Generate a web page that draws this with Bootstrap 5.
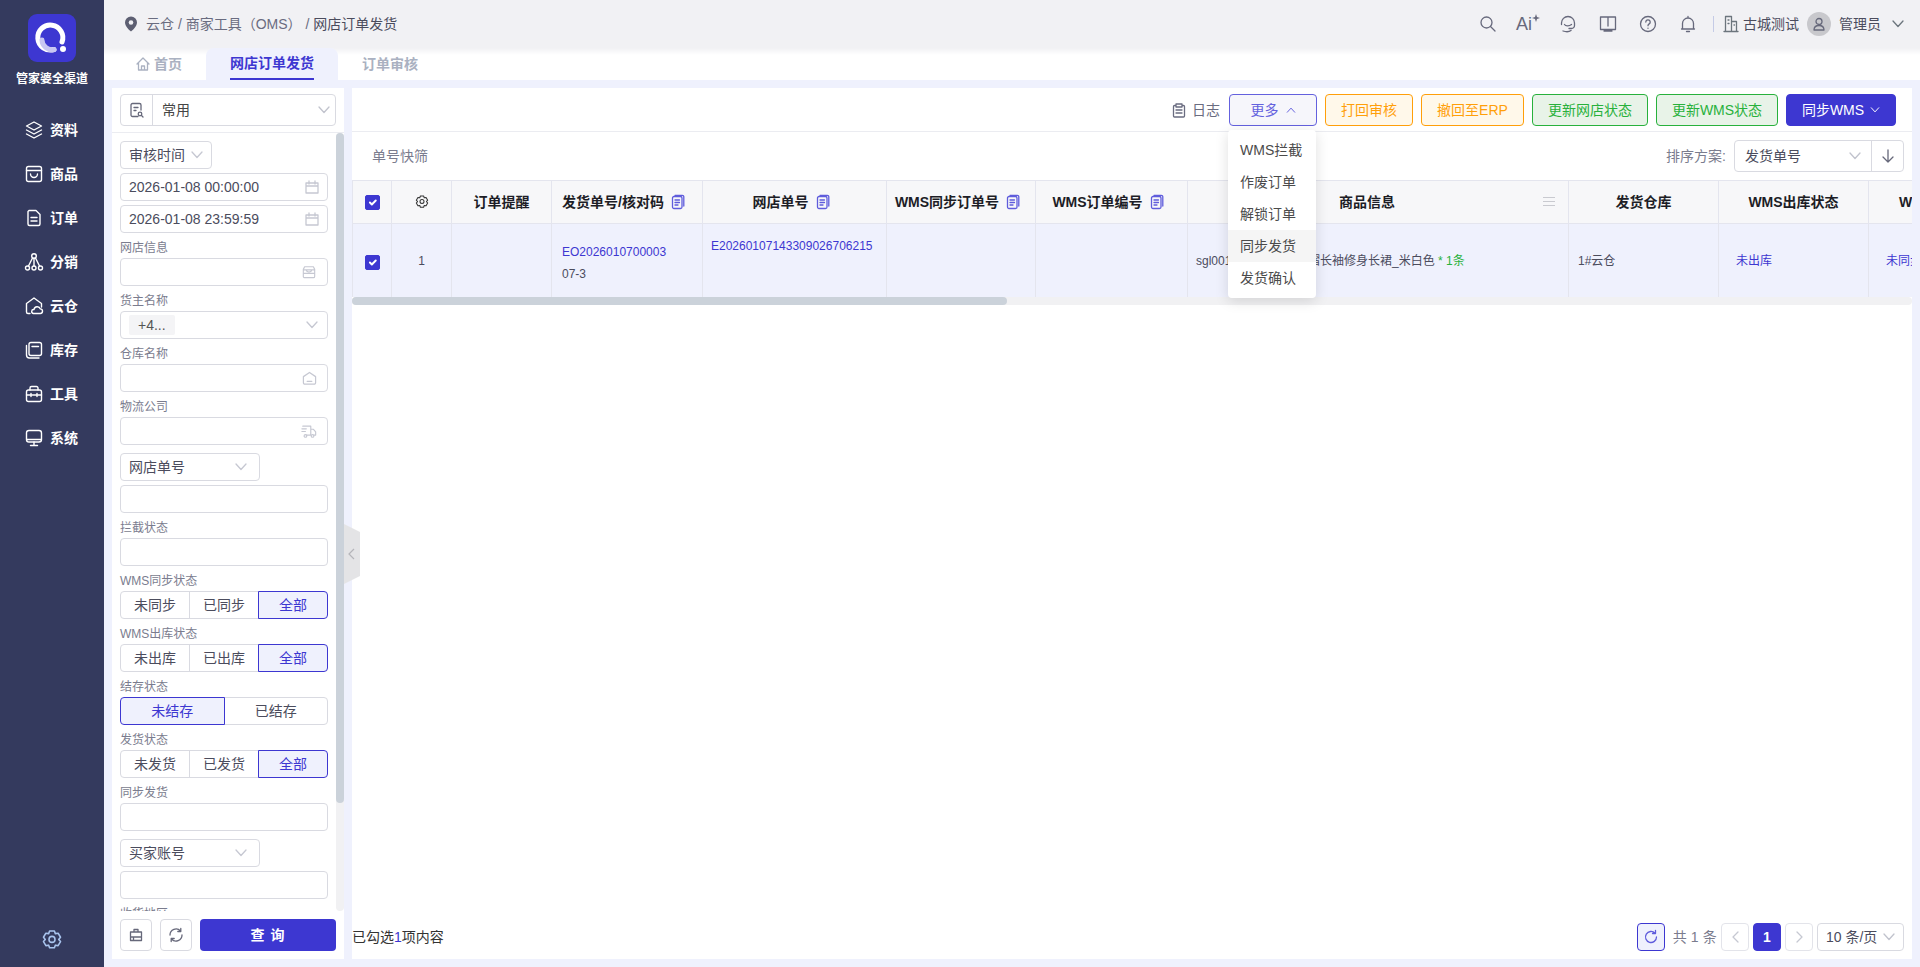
<!DOCTYPE html>
<html lang="zh-CN">
<head>
<meta charset="utf-8">
<title>网店订单发货</title>
<link href="https://cdn.jsdelivr.net/npm/bootstrap@5.3.0/dist/css/bootstrap.min.css" rel="stylesheet">
<style>
html,body{height:100%;}
body{font-family:"Liberation Sans","Noto Sans CJK SC",sans-serif;font-size:14px;color:#333;background:#eff1fd;overflow:hidden;}
.ico{fill:none;stroke:currentColor;stroke-width:1.3;stroke-linecap:round;stroke-linejoin:round;flex:none;}
.app{height:967px;width:1920px;}
.side{width:104px;flex:none;background:#343a5e;color:#fff;padding-top:14px;}
.logo{width:48px;height:48px;border-radius:9px;background:#3d37d1;}
.logo-name{font-size:12px;font-weight:700;line-height:18px;margin-top:8px;white-space:nowrap;}
.side-nav{margin-top:20px;}
.side-item{height:44px;padding-left:24px;gap:6px;font-weight:700;color:#fff;}
.side-item .ico{stroke-width:1.4;}
.side-gear{color:#a9c4ee;margin-bottom:15px;}
.mainc{min-width:0;}
.topb{height:48px;background:#f1f1f4;padding:0 16px 0 20px;flex:none;}
.crumb{color:#6a6c80;margin-left:8px;}
.crumb b{font-weight:400;color:#4b4c5d;}
.topi{width:40px;color:#67697c;}
.ai-txt{font-size:18px;line-height:20px;font-weight:400;}
.vsep{width:1px;height:16px;background:#c5cbe6;margin:0 9px 0 5px;}
.tabsb{height:32px;flex:none;padding-left:8px;background:linear-gradient(#f1f1f4,#fff 7px);}
.tabx{height:32px;padding:0 24px;font-weight:700;color:#aab1c1;gap:4px;}
.tabx.on{background:#eff1fd;color:#3d37d1;border-radius:8px 8px 0 0;}
.tabx.on span{display:block;line-height:30px;height:32px;border-bottom:2px solid #3d37d1;}
.work{flex:1;min-height:0;padding:8px;gap:8px;}
.lp{width:232px;flex:none;background:#fff;position:relative;}
.lp-head{height:45px;padding:6px 8px;border-bottom:1px solid #ebecf1;flex:none;}
.combo{height:32px;border:1px solid #d9dae1;border-radius:4px;}
.combo-ic{width:32px;border-right:1px solid #d9dae1;color:#66687a;}
.combo-tx{padding:0 5px 0 9px;color:#444;}
.chev{color:#c1c3cd;flex:none;}
.lp-body{height:778px;flex:none;}
.form-area{width:224px;flex:none;padding:8px 8px 0;overflow:hidden;}
.trk{width:8px;background:#f1f1f3;border-radius:4px;flex:none;}
.trk i{display:block;width:8px;height:670px;background:#cbd2da;border-radius:4px;}
.fld{height:28px;border:1px solid #d9dae1;border-radius:4px;background:#fff;padding:0 8px;color:#4b4c5d;line-height:1;font-size:14px;min-height:0;}
.fld .ico{color:#c6c8d2;}
.gp4{margin-top:4px;}.gp8{margin-top:8px;}
.mr1{margin-right:1px;}.mr2{margin-right:2px;}.mr3{margin-right:3px;}
.flabel{font-size:12px;line-height:16px;color:#7a7c8e;margin:7px 0 2px;}
.tagx{height:20px;width:46px;background:#f4f4f6;border-radius:2px;padding-left:9px;line-height:20px;color:#555;}
.seg{display:flex;height:28px;width:100%;}
.seg .btn{flex:1 1 0;font-size:14px;padding:0;height:28px;border:1px solid #d9dae1;color:#4b4c5d;background:#fff;border-radius:0;margin-left:-1px;line-height:1;}
.seg .btn:first-child{margin-left:0;border-radius:4px 0 0 4px;}
.seg .btn:last-child{border-radius:0 4px 4px 0;}
.seg .btn.act{background:#eff1fd;color:#3d37d1;border-color:#3d37d1;position:relative;z-index:1;}
.lp-foot{height:48px;padding:8px;gap:8px;}
.sq{width:32px;height:32px;padding:0;border:1px solid #d9dae1;border-radius:4px;background:#fff;color:#66687a;}
.qbtn{flex:1;height:32px;padding:0;background:#3d37d1;color:#fff;border:0;border-radius:4px;font-weight:700;font-size:14px;letter-spacing:1px;}
.hand{position:absolute;left:232px;top:436px;color:#b5b5ba;z-index:2;}
.rp{flex:1;min-width:0;background:#fff;position:relative;}
.tb1{height:44px;padding:6px 16px 0 0;border-bottom:1px solid #ebecf1;flex:none;gap:8px;}
.tb-log{color:#6a6c80;gap:6px;margin-right:1px;}
.bt{height:32px;font-size:14px;padding:0;border-radius:4px;line-height:1;border:1px solid;}
.bt-more{width:88px;background:#f6f6fb;border-color:#6461de;color:#6461de;gap:7px;}
.bt-or{background:#fff8ea;border-color:#ff9f0a;color:#ff9f0a;}
.bt-gr{background:#e8f3e8;border-color:#28b13c;color:#28b13c;}
.bt-pr{width:110px;background:#3d37d1;border-color:#3d37d1;color:#fff;gap:6px;}
.ddw{position:relative;}
.ddm{position:absolute;top:36px;left:-1px;width:88px;min-width:0;padding:4px 0;border:0;border-radius:4px;box-shadow:0 3px 14px rgba(0,0,0,.13);z-index:5;font-size:14px;}
.ddm .dropdown-item{height:32px;line-height:32px;padding:0 0 0 12px;color:#4b4b4b;font-size:14px;}
.ddm .dropdown-item.hov{background:#f5f5f5;}
.tb2{height:48px;flex:none;padding:0 8px 0 20px;}
.mut{color:#7a7c8e;}
.srt{width:170px;height:32px;border:1px solid #d9dae1;border-radius:4px;margin-left:8px;}
.srt-s{flex:1;padding:0 10px;color:#4b4c5d;}
.srt-b{width:32px;border-left:1px solid #d9dae1;color:#66687a;}
.gridw{overflow:hidden;flex:none;height:117px;}
.gridt{table-layout:fixed;width:1700px;margin:0;border-collapse:collapse;font-size:12px;--bs-table-bg:transparent;}
.gridt>:not(caption)>*>*{border:1px solid #e4e5ee;padding:0 10px;box-shadow:none;}
.gridt thead th{height:43px;background:#f7f7f9;font-size:14px;font-weight:700;color:#1d1d26;text-align:center;vertical-align:middle;white-space:nowrap;position:relative;}
.gridt tbody td{height:74px;background:#eff1fd;color:#4b4c5d;vertical-align:middle;white-space:nowrap;overflow:hidden;}
.gridt tbody td.lnk,.lnk{color:#3d37d1;}
.thf{display:flex;align-items:center;justify-content:center;gap:6px;padding-right:6px;}
.cpy{color:#5f5cdc;}
.gridt .form-check-input{margin:0;width:15px;height:15px;background-color:#3d37d1;border-color:#3d37d1;border-radius:2px;display:block;}
.gridt>:not(caption)>*>.pad0{padding:0;}
.gridt>tbody>*>.pad0{padding-top:3px;}
.cellc{display:flex;justify-content:center;}
.hamb{position:absolute;right:13px;top:15px;color:#c9cad0;}
.gridt>thead>tr>.th-goods{padding-right:32px;}
.gridt>tbody>tr>.l2{line-height:22px;padding-top:4px;}
.gridt>tbody>tr>.tp{vertical-align:top;padding-top:14px;line-height:16px;}
.grn{color:#28b13c;}
.hbar{height:8px;background:#f1f1f3;border-radius:4px;flex:none;}
.hbar i{display:block;height:8px;width:655px;background:#cbd2da;border-radius:4px;}
.rfoot{margin-top:auto;height:36px;padding-right:8px;margin-bottom:4px;flex:none;}
.pg{width:28px;height:28px;border:1px solid #e3e4ea;border-radius:4px;color:#c6c8d2;background:#fff;margin-left:4px;padding:0;}
.pg.on{background:#3d37d1;border-color:#3d37d1;color:#fff;font-weight:700;font-size:14px;}
.pg-ref{border-color:#3d37d1;color:#5f5cdc;background:#eff1fd;margin-left:0;margin-right:8px;}
.psz{width:87px;height:28px;border:1px solid #d9dae1;border-radius:4px;margin-left:4px;padding:0 8px;gap:5px;color:#4b4c5d;white-space:nowrap;}
</style>
</head>
<body>
<svg width="0" height="0" class="position-absolute">
<defs>
<symbol id="i-chev" viewBox="0 0 12 8"><path d="M1 1l5 5.500L11 1"/></symbol>
<symbol id="i-layers" viewBox="0 0 20 20"><path d="M10 2l7.500 4L10 10 2.500 6zM2.500 10l7.500 4 7.500-4M2.500 14l7.500 4 7.500-4"/></symbol>
<symbol id="i-goods" viewBox="0 0 20 20"><rect x="2.500" y="2.500" width="15" height="15" rx="2"/><path d="M2.500 6.500h15M6.500 10a3.500 3.500 0 0 0 7 0"/></symbol>
<symbol id="i-doc" viewBox="0 0 20 20"><path d="M5 2.500h7l4 4V16a1.500 1.500 0 0 1-1.500 1.500h-9A1.500 1.500 0 0 1 4 16V3.500zM7 9.500h6M7 13h6"/></symbol>
<symbol id="i-net" viewBox="0 0 20 20"><circle cx="10" cy="4" r="2.300"/><circle cx="3.500" cy="16" r="2"/><circle cx="10" cy="16" r="2"/><circle cx="16.500" cy="16" r="2"/><path d="M10 6.300V14M8.500 6L4.500 14M11.500 6l4 8"/></symbol>
<symbol id="i-cloud" viewBox="0 0 20 20"><path d="M6 17.500H4a1.500 1.500 0 0 1-1.500-1.500V7.500L10 2l7.500 5.500V11"/><path d="M9.500 17.500h6.500a2.300 2.300 0 0 0 .4-4.600 3.400 3.400 0 0 0-6.500.6 2 2 0 0 0-.4 4z"/></symbol>
<symbol id="i-box" viewBox="0 0 20 20"><rect x="5" y="2.500" width="12.500" height="13" rx="2"/><path d="M2.500 5.500V15a3 3 0 0 0 3 3H15M8 6.500h6.500"/></symbol>
<symbol id="i-tool" viewBox="0 0 20 20"><rect x="2.500" y="6" width="15" height="11.500" rx="2"/><path d="M6 6V4a1.500 1.500 0 0 1 1.500-1.500h5A1.500 1.500 0 0 1 14 4v2M2.500 11h15M7 9.500v3M13 9.500v3"/></symbol>
<symbol id="i-mon" viewBox="0 0 20 20"><rect x="2.500" y="2.500" width="15" height="11.500" rx="2.500"/><path d="M3 11.500h14M10 14v3.500M6.500 17.500h7"/></symbol>
<symbol id="i-gear" viewBox="0 0 20 20"><path d="M8 2.500h4l.8 2.200 2.300-.4 2 3.400-1.500 1.800 1.500 1.800-2 3.400-2.300-.4-.8 2.200H8l-.8-2.200-2.300.4-2-3.400 1.500-1.800-1.500-1.800 2-3.400 2.300.4z"/><circle cx="10" cy="9.500" r="2.500"/></symbol>
<symbol id="i-copy" viewBox="0 0 16 16"><rect x="2.500" y="2.500" width="9.500" height="12" rx="1.500"/><path d="M5 6h4.500M5 8.500h4.500M5 11h3M13.800 12V2.800A1.500 1.500 0 0 0 12.300 1.300H5"/></symbol>
<symbol id="i-cal" viewBox="0 0 14 14"><path d="M1 3h12v10H1zM1 6h12M4 1v3M10 1v3"/></symbol>
<symbol id="i-store" viewBox="0 0 16 16"><path d="M3 2h10l1.500 3v8a1.500 1.500 0 0 1-1.500 1.500H3A1.500 1.500 0 0 1 1.500 13V5zM1.500 5.500h13M1.500 9.500h13M5 5.500a3 2.500 0 0 0 6 0"/></symbol>
<symbol id="i-ware" viewBox="0 0 16 16"><path d="M1.500 6L8 1.500 14.500 6v6.500a1.500 1.500 0 0 1-1.500 1.500H3a1.500 1.500 0 0 1-1.500-1.500zM5.500 11h5"/></symbol>
<symbol id="i-truck" viewBox="0 0 18 16"><path d="M2 2h9v10H6M11 5.500h3l2.500 3V12h-2M1 5h5M1 8h4"/><circle cx="5" cy="13" r="1.500"/><circle cx="13" cy="13" r="1.500"/></symbol>
<symbol id="i-sync" viewBox="0 0 16 16"><path d="M2 8a6 6 0 0 1 10.500-4M14 8a6 6 0 0 1-10.500 4M12.800 1.500v3h-3M3.200 14.500v-3h3"/></symbol>
</defs>
</svg>

<div class="app d-flex">
  <aside class="side d-flex flex-column align-items-center">
    <div class="logo d-flex align-items-center justify-content-center">
      <svg width="36" height="36" viewBox="0 0 36 36"><path d="M28 22A12.500 12.500 0 1 0 20 29.500" fill="none" stroke="#fff" stroke-width="5" stroke-linecap="round"/><path d="M8 20a10 10 0 0 0 12 9.500" fill="none" stroke="#c8c6f2" stroke-width="5" stroke-linecap="round"/><circle cx="29" cy="29" r="3" fill="#fff"/></svg>
    </div>
    <div class="logo-name">管家婆全渠道</div>
    <nav class="side-nav w-100">
      <div class="side-item d-flex align-items-center"><svg class="ico" width="20" height="20"><use href="#i-layers"/></svg>资料</div>
      <div class="side-item d-flex align-items-center"><svg class="ico" width="20" height="20"><use href="#i-goods"/></svg>商品</div>
      <div class="side-item d-flex align-items-center"><svg class="ico" width="20" height="20"><use href="#i-doc"/></svg>订单</div>
      <div class="side-item d-flex align-items-center"><svg class="ico" width="20" height="20"><use href="#i-net"/></svg>分销</div>
      <div class="side-item d-flex align-items-center"><svg class="ico" width="20" height="20"><use href="#i-cloud"/></svg>云仓</div>
      <div class="side-item d-flex align-items-center"><svg class="ico" width="20" height="20"><use href="#i-box"/></svg>库存</div>
      <div class="side-item d-flex align-items-center"><svg class="ico" width="20" height="20"><use href="#i-tool"/></svg>工具</div>
      <div class="side-item d-flex align-items-center"><svg class="ico" width="20" height="20"><use href="#i-mon"/></svg>系统</div>
    </nav>
    <svg class="ico side-gear mt-auto" width="24" height="24"><use href="#i-gear"/></svg>
  </aside>

  <div class="mainc flex-grow-1 d-flex flex-column">
    <header class="topb d-flex align-items-center">
      <svg width="14" height="16" viewBox="0 0 14 16"><path d="M7 .5a6 6 0 0 1 6 6c0 3.600-4 7.400-6 9-2-1.600-6-5.400-6-9a6 6 0 0 1 6-6z" fill="#5d5f72"/><circle cx="7" cy="6.500" r="2.300" fill="#f1f1f4"/></svg>
      <div class="crumb">云仓 / 商家工具（OMS） / <b>网店订单发货</b></div>
      <div class="ms-auto d-flex align-items-center">
        <div class="topi d-flex justify-content-center"><svg class="ico" width="18" height="18" viewBox="0 0 18 18"><circle cx="7.500" cy="7.500" r="5.500"/><path d="M11.500 11.500L16 16"/></svg></div>
        <div class="topi d-flex justify-content-center align-items-start"><span class="ai-txt">Ai</span><svg width="8" height="8" viewBox="0 0 8 8" fill="#67697c"><path d="M4 0l1 3 3 1-3 1-1 3-1-3-3-1 3-1z"/></svg></div>
        <div class="topi d-flex justify-content-center"><svg class="ico" width="18" height="18" viewBox="0 0 18 18"><path d="M2.500 9.500V8a6.500 6.500 0 0 1 13 0v2.500a3 3 0 0 1-3 3H10M5.500 9.500c1 1.500 4.500 2 7 0"/><path d="M4 16c3 1 6 1 8-.5"/></svg></div>
        <div class="topi d-flex justify-content-center"><svg class="ico" width="18" height="18" viewBox="0 0 18 18"><path d="M1.500 2h15v12.500h-15zM9 2v9M5 16h8"/></svg></div>
        <div class="topi d-flex justify-content-center"><svg class="ico" width="18" height="18" viewBox="0 0 18 18"><circle cx="9" cy="9" r="7.500"/><path d="M6.800 7a2.200 2.200 0 1 1 3.400 1.900c-.8.500-1.200 1-1.200 1.800M9 13.100v.2"/></svg></div>
        <div class="topi d-flex justify-content-center"><svg class="ico" width="18" height="18" viewBox="0 0 18 18"><path d="M3.500 14V8.500a5.500 5.500 0 0 1 11 0V14zM2.500 14h13M9 1.500V3M7.500 16.500h3"/></svg></div>
        <div class="vsep"></div>
        <svg class="ico me-1 text-secondary" width="16" height="18" viewBox="0 0 16 18"><path d="M1 16.500h14M2.500 16.500V1.500h6v15M8.500 6.500h5v10M5 5h1M5 8.500h1M11 10h.5"/></svg>
        <span style="color:#4b4c5d">古城测试</span>
        <div class="d-flex align-items-center justify-content-center rounded-circle ms-2" style="width:24px;height:24px;background:#c8c8cc;color:#66687a"><svg class="ico" width="14" height="14" viewBox="0 0 14 14"><circle cx="7" cy="4.500" r="3"/><path d="M2 13c0-3 2-4.500 5-4.500s5 1.500 5 4.500z"/></svg></div>
        <span class="ms-2" style="color:#4b4c5d">管理员</span>
        <svg class="ico chev text-secondary" width="12" height="8" style="margin-left:11px"><use href="#i-chev"/></svg>
      </div>
    </header>

    <div class="tabsb d-flex">
      <div class="tabx d-flex align-items-center"><svg class="ico" width="14" height="14" viewBox="0 0 14 14"><path d="M1 7l6-6 6 6M2.500 6v7h9V6M5.500 13V9h3v4"/></svg>首页</div>
      <div class="tabx on"><span>网店订单发货</span></div>
      <div class="tabx d-flex align-items-center">订单审核</div>
    </div>

    <div class="work d-flex">
      <section class="lp d-flex flex-column">
        <div class="lp-head">
          <div class="combo d-flex align-items-stretch">
            <div class="combo-ic d-flex align-items-center justify-content-center"><svg class="ico" width="16" height="16" viewBox="0 0 16 16"><path d="M9 14.500H3.500A1.500 1.500 0 0 1 2 13V3a1.500 1.500 0 0 1 1.500-1.500h7A1.500 1.500 0 0 1 12 3v5M5 5.500h4M5 8.500h2"/><circle cx="11" cy="12" r="1.800"/><path d="M12.500 13.500l1.500 1.500"/></svg></div>
            <div class="combo-tx flex-grow-1 d-flex align-items-center justify-content-between">常用<svg class="ico chev" width="12" height="8"><use href="#i-chev"/></svg></div>
          </div>
        </div>
        <div class="lp-body d-flex">
          <div class="form-area">
            <div class="fld d-flex align-items-center justify-content-between" style="width:92px">审核时间<svg class="ico chev" width="12" height="8"><use href="#i-chev"/></svg></div>
            <div class="fld gp4 d-flex align-items-center justify-content-between">2026-01-08 00:00:00<svg class="ico" width="14" height="14"><use href="#i-cal"/></svg></div>
            <div class="fld gp4 d-flex align-items-center justify-content-between">2026-01-08 23:59:59<svg class="ico" width="14" height="14"><use href="#i-cal"/></svg></div>
            <div class="flabel">网店信息</div>
            <div class="fld d-flex align-items-center justify-content-end"><svg class="ico mr3" width="14" height="14"><use href="#i-store"/></svg></div>
            <div class="flabel">货主名称</div>
            <div class="fld d-flex align-items-center justify-content-between"><span class="tagx">+4...</span><svg class="ico chev mr1" width="12" height="8"><use href="#i-chev"/></svg></div>
            <div class="flabel">仓库名称</div>
            <div class="fld d-flex align-items-center justify-content-end"><svg class="ico mr2" width="15" height="15"><use href="#i-ware"/></svg></div>
            <div class="flabel">物流公司</div>
            <div class="fld d-flex align-items-center justify-content-end"><svg class="ico mr2" width="16" height="15"><use href="#i-truck"/></svg></div>
            <div class="fld gp8 d-flex align-items-center justify-content-between" style="width:140px">网店单号<svg class="ico chev me-1" width="12" height="8"><use href="#i-chev"/></svg></div>
            <div class="fld gp4"></div>
            <div class="flabel">拦截状态</div>
            <div class="fld"></div>
            <div class="flabel">WMS同步状态</div>
            <div class="btn-group seg"><button class="btn">未同步</button><button class="btn">已同步</button><button class="btn act">全部</button></div>
            <div class="flabel">WMS出库状态</div>
            <div class="btn-group seg"><button class="btn">未出库</button><button class="btn">已出库</button><button class="btn act">全部</button></div>
            <div class="flabel">结存状态</div>
            <div class="btn-group seg"><button class="btn act">未结存</button><button class="btn">已结存</button></div>
            <div class="flabel">发货状态</div>
            <div class="btn-group seg"><button class="btn">未发货</button><button class="btn">已发货</button><button class="btn act">全部</button></div>
            <div class="flabel">同步发货</div>
            <div class="fld"></div>
            <div class="fld gp8 d-flex align-items-center justify-content-between" style="width:140px">买家账号<svg class="ico chev me-1" width="12" height="8"><use href="#i-chev"/></svg></div>
            <div class="fld gp4"></div>
            <div class="flabel">收货地区</div>
          </div>
          <div class="trk"><i></i></div>
        </div>
        <div class="lp-foot d-flex">
          <button class="btn sq d-flex align-items-center justify-content-center"><svg class="ico" width="14" height="14" viewBox="0 0 14 14"><path d="M5 4V1.500h4V4M1.500 4h11v8.500h-11zM1.500 9h11M4.500 9v3.500"/></svg></button>
          <button class="btn sq d-flex align-items-center justify-content-center"><svg class="ico" width="16" height="16"><use href="#i-sync"/></svg></button>
          <button class="btn qbtn">查 询</button>
        </div>
        <svg class="hand" width="16" height="60" viewBox="0 0 16 60"><path d="M0 0l16 8v44L0 60z" fill="#e4e4e6"/><path d="M10 25l-5 5 5 5" fill="none" stroke="currentColor" stroke-width="1.200"/></svg>
      </section>

      <section class="rp d-flex flex-column">
        <div class="tb1 d-flex justify-content-end">
          <div class="tb-log d-flex align-items-center" style="height:32px"><svg class="ico" width="14" height="15" viewBox="0 0 14 15"><path d="M4 2.500H2.500a1 1 0 0 0-1 1V13a1 1 0 0 0 1 1h9a1 1 0 0 0 1-1V3.500a1 1 0 0 0-1-1H10M4 1h6v3H4zM4 7h6M4 10h6"/></svg>日志</div>
          <div class="ddw">
            <button class="btn bt bt-more d-flex align-items-center justify-content-center">更多<svg class="ico" width="10" height="6" viewBox="0 0 12 8"><path d="M1 7l5-5.500L11 7"/></svg></button>
            <ul class="dropdown-menu show ddm">
              <li><a class="dropdown-item" href="#">WMS拦截</a></li>
              <li><a class="dropdown-item" href="#">作废订单</a></li>
              <li><a class="dropdown-item" href="#">解锁订单</a></li>
              <li><a class="dropdown-item hov" href="#">同步发货</a></li>
              <li><a class="dropdown-item" href="#">发货确认</a></li>
            </ul>
          </div>
          <button class="btn bt bt-or" style="width:88px">打回审核</button>
          <button class="btn bt bt-or" style="width:103px">撤回至ERP</button>
          <button class="btn bt bt-gr" style="width:116px">更新网店状态</button>
          <button class="btn bt bt-gr" style="width:122px">更新WMS状态</button>
          <button class="btn bt bt-pr d-flex align-items-center justify-content-center">同步WMS<svg class="ico" width="10" height="6" viewBox="0 0 12 8"><path d="M1 1l5 5.500L11 1"/></svg></button>
        </div>
        <div class="tb2 d-flex align-items-center">
          <span class="mut">单号快筛</span>
          <span class="mut ms-auto">排序方案:</span>
          <div class="srt d-flex">
            <div class="srt-s d-flex align-items-center justify-content-between">发货单号<svg class="ico chev" width="12" height="8"><use href="#i-chev"/></svg></div>
            <div class="srt-b d-flex align-items-center justify-content-center"><svg class="ico" width="12" height="14" viewBox="0 0 12 14"><path d="M6 1v12M1 8l5 5 5-5"/></svg></div>
          </div>
        </div>
        <div class="gridw">
          <table class="table gridt">
            <colgroup><col style="width:39px"><col style="width:60px"><col style="width:100px"><col style="width:151px"><col style="width:184px"><col style="width:149px"><col style="width:152px"><col style="width:381px"><col style="width:150px"><col style="width:150px"><col style="width:184px"></colgroup>
            <thead>
              <tr>
                <th class="pad0"><div class="cellc"><input class="form-check-input" type="checkbox" checked aria-label="全选"></div></th>
                <th class="pad0"><div class="cellc"><svg class="ico" width="16" height="16" style="color:#333"><use href="#i-gear"/></svg></div></th>
                <th>订单提醒</th>
                <th><div class="thf">发货单号/核对码<svg class="ico cpy" width="16" height="16"><use href="#i-copy"/></svg></div></th>
                <th><div class="thf">网店单号<svg class="ico cpy" width="16" height="16"><use href="#i-copy"/></svg></div></th>
                <th><div class="thf">WMS同步订单号<svg class="ico cpy" width="16" height="16"><use href="#i-copy"/></svg></div></th>
                <th><div class="thf">WMS订单编号<svg class="ico cpy" width="16" height="16"><use href="#i-copy"/></svg></div></th>
                <th class="th-goods">商品信息<svg class="hamb" width="12" height="12" viewBox="0 0 12 12" fill="none" stroke="currentColor"><path d="M0 1.500h12M0 5.500h12M0 9.500h12"/></svg></th>
                <th>发货仓库</th>
                <th>WMS出库状态</th>
                <th class="text-start" style="padding-left:30px">WMS同步状态</th>
              </tr>
            </thead>
            <tbody>
              <tr>
                <td class="pad0"><div class="cellc"><input class="form-check-input" type="checkbox" checked aria-label="选择"></div></td>
                <td class="text-center">1</td>
                <td></td>
                <td class="l2"><div class="lnk">EO2026010700003</div><div>07-3</div></td>
                <td class="tp lnk" style="padding-left:8px">E20260107143309026706215</td>
                <td></td>
                <td></td>
                <td style="padding-left:8px">sgl00123 法式收腰百褶长袖修身长裙_米白色 <span class="grn">* 1条</span></td>
                <td style="padding-left:9px">1#云仓</td>
                <td class="lnk" style="padding-left:17px">未出库</td>
                <td class="lnk" style="padding-left:17px">未同步</td>
              </tr>
            </tbody>
          </table>
        </div>
        <div class="hbar"><i></i></div>
        <div class="rfoot d-flex align-items-center">
          <span>已勾选<span class="lnk">1</span>项内容</span>
          <div class="ms-auto d-flex align-items-center">
            <button class="btn pg pg-ref d-flex align-items-center justify-content-center"><svg class="ico" width="16" height="16" viewBox="0 0 16 16"><path d="M13.500 8A5.500 5.500 0 1 1 12 4.200M12.500 1.500v3h-3"/></svg></button>
            <span class="mut" style="letter-spacing:.15px">共 1 条</span>
            <button class="btn pg d-flex align-items-center justify-content-center"><svg class="ico" width="7" height="12" viewBox="0 0 7 12"><path d="M6 1L1 6l5 5"/></svg></button>
            <button class="btn pg on d-flex align-items-center justify-content-center">1</button>
            <button class="btn pg d-flex align-items-center justify-content-center"><svg class="ico" width="7" height="12" viewBox="0 0 7 12"><path d="M1 1l5 5-5 5"/></svg></button>
            <div class="psz d-flex align-items-center justify-content-between">10 条/页<svg class="ico chev" width="12" height="8"><use href="#i-chev"/></svg></div>
          </div>
        </div>
      </section>
    </div>
  </div>
</div>
</body>
</html>
